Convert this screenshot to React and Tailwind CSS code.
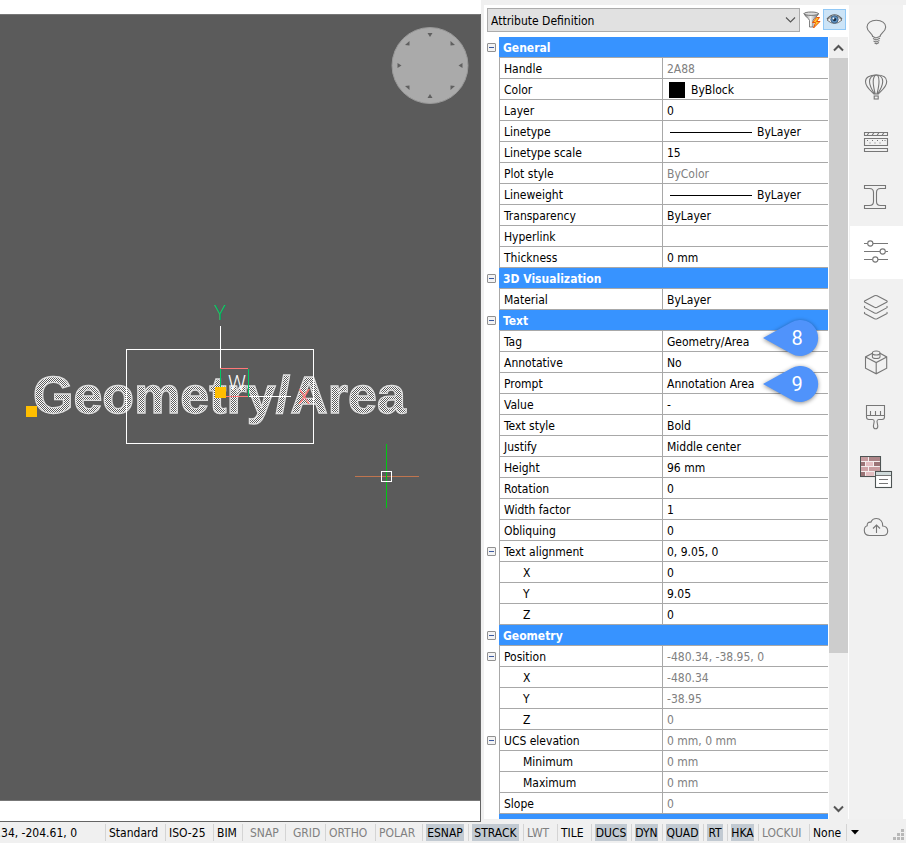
import { clsx } from "clsx";

const ROWS = [
  { head: "General" },
  { label: "Handle", value: "2A88", dim: true },
  { label: "Color", value: "ByBlock", swatch: true },
  { label: "Layer", value: "0" },
  { label: "Linetype", value: "ByLayer", line: true },
  { label: "Linetype scale", value: "15" },
  { label: "Plot style", value: "ByColor", dim: true },
  { label: "Lineweight", value: "ByLayer", line: true },
  { label: "Transparency", value: "ByLayer" },
  { label: "Hyperlink", value: "" },
  { label: "Thickness", value: "0 mm" },
  { head: "3D Visualization" },
  { label: "Material", value: "ByLayer" },
  { head: "Text" },
  { label: "Tag", value: "Geometry/Area", marker: "8" },
  { label: "Annotative", value: "No" },
  { label: "Prompt", value: "Annotation Area", marker: "9" },
  { label: "Value", value: "-" },
  { label: "Text style", value: "Bold" },
  { label: "Justify", value: "Middle center" },
  { label: "Height", value: "96 mm" },
  { label: "Rotation", value: "0" },
  { label: "Width factor", value: "1" },
  { label: "Obliquing", value: "0" },
  { label: "Text alignment", value: "0, 9.05, 0", expand: true },
  { label: "X", value: "0", indent: true },
  { label: "Y", value: "9.05", indent: true },
  { label: "Z", value: "0", indent: true },
  { head: "Geometry" },
  { label: "Position", value: "-480.34, -38.95, 0", expand: true, dim: true },
  { label: "X", value: "-480.34", indent: true, dim: true },
  { label: "Y", value: "-38.95", indent: true, dim: true },
  { label: "Z", value: "0", indent: true, dim: true },
  { label: "UCS elevation", value: "0 mm, 0 mm", expand: true, dim: true },
  { label: "Minimum", value: "0 mm", indent: true, dim: true },
  { label: "Maximum", value: "0 mm", indent: true, dim: true },
  { label: "Slope", value: "0", dim: true },
  { head: "" },
];

const STATUS = [
  { text: "Standard", w: "w-[60px]" },
  { text: "ISO-25", w: "w-[48px]" },
  { text: "BIM", w: "w-[29px]" },
  { text: "SNAP", w: "w-[43px]", off: true, wide: true },
  { text: "GRID", w: "w-[40px]", off: true, wide: true },
  { text: "ORTHO", w: "w-[50px]", off: true },
  { text: "POLAR", w: "w-[47px]", off: true },
  { text: "ESNAP", w: "w-[46px]", on: true },
  { text: "STRACK", w: "w-[55px]", on: true },
  { text: "LWT", w: "w-[34px]", off: true },
  { text: "TILE", w: "w-[34px]" },
  { text: "DUCS", w: "w-[40px]", on: true },
  { text: "DYN", w: "w-[31px]", on: true },
  { text: "QUAD", w: "w-[41px]", on: true },
  { text: "RT", w: "w-[24px]", on: true },
  { text: "HKA", w: "w-[31px]", on: true },
  { text: "LOCKUI", w: "w-[51px]", off: true },
  { text: "None", w: "w-[37px]" },
];

function Canvas() {
  return (
    <div className="relative flex-1 overflow-hidden border-y border-[#777] bg-[#5b5b5b]">
      <svg className="absolute left-0 top-0" width="480" height="560" shapeRendering="crispEdges">
        <defs>
          <pattern id="dither" width="4" height="4" patternUnits="userSpaceOnUse">
            <rect width="4" height="4" fill="#5b5b5b" />
            <path d="M0 0h1v1H0zM2 0h1v1H2zM1 1h1v1H1zM3 1h1v1H3zM0 2h1v1H0zM2 2h1v1H2zM1 3h1v1H1zM3 3h1v1H3z" fill="#fff" />
          </pattern>
        </defs>
        <text x="33" y="398" fontFamily="Liberation Sans, Arial, sans-serif" fontWeight="700" fontSize="52" fill="url(#dither)" stroke="#dcdcdc" strokeWidth="1.300">
          Geometry/Area
        </text>
        <g fill="none" strokeWidth="1">
          <rect x="126.5" y="334.5" width="187" height="94" stroke="#fff" />
          <path d="M220.5 311v43M249 381.5h42" stroke="#fff" />
          <path d="M220 353.5h28M226 381.5h22" stroke="#ff7878" />
          <path d="M220.5 354v18M248.5 354v28" stroke="#00c864" />
          <path d="M355 461.5h64" stroke="#c0754f" />
          <path d="M386.5 429v64" stroke="#00c814" />
          <rect x="381.5" y="456.5" width="10" height="10" stroke="#fff" />
        </g>
        <g fontFamily="Roboto, sans-serif" fontWeight="300" fontSize="20">
          <text x="214" y="305" fill="#00c864">Y</text>
          <text x="228" y="375" fill="#fff">W</text>
          <text x="298" y="389" fill="#ff7878">X</text>
        </g>
        <rect x="26" y="391" width="11" height="11" fill="#ffbe00" />
        <rect x="215" y="372" width="11" height="11" fill="#ffbe00" />
      </svg>
      <svg className="absolute right-[11px] top-3" width="78" height="78" viewBox="0 0 78 78">
        <circle cx="39" cy="38.500" r="38" fill="#aaa" stroke="#999" strokeWidth="1" />
        <g fill="#606060">
          <path d="M36.500 6h5l-2.500 4z" />
          <path d="M36.500 71h5l-2.500-4z" />
          <path d="M6.500 36v5l4-2.500z" />
          <path d="M71.500 36v5l-4-2.500z" />
          <path d="M14 18l4.500-4v4.500z" />
          <path d="M64 18l-4.500-4v4.500z" />
          <path d="M14 59l4.500 4v-4.500z" />
          <path d="M64 59l-4.500 4v-4.500z" />
        </g>
      </svg>
    </div>
  );
}

function Expander({ name }) {
  return (
    <button aria-label={"Collapse " + name} className="ml-[3px] flex size-[9px] items-center justify-center rounded-[1px] border border-[#919191] bg-[#f3f3f3]">
      <span className="h-px w-[5px] bg-[#3c5aa0]" />
    </button>
  );
}

function Marker({ text }) {
  return (
    <svg
      className={clsx("absolute left-[96px] z-10", text === "8" ? "-top-4" : "-top-3")}
      width="66"
      height="48"
      viewBox="0 0 66 48"
    >
      <g filter="drop-shadow(0 1px 2px rgba(0,0,0,.45))">
        <path d="M4 23L32 7.500A18 18 0 1 1 32 38.500Z" fill="#5093fb" />
      </g>
      <text x="38" y="30" textAnchor="middle" fontFamily="Roboto, sans-serif" fontSize="20" fill="#fff">
        {text}
      </text>
    </svg>
  );
}

function Row({ row }) {
  if (row.head !== undefined) {
    return (
      <tr className="h-[21px]">
        <td className="w-[15px] p-0">{row.head && <Expander name={row.head} />}</td>
        <th colSpan={2} scope="colgroup" className="border-b border-[#a8a8a8] bg-[#3793ff] p-0 pl-1 pt-0.5 text-left font-bold text-white">
          {row.head}
        </th>
      </tr>
    );
  }
  return (
    <tr className="h-[21px]">
      <td className="w-[15px] p-0">{row.expand && <Expander name={row.label} />}</td>
      <th scope="row" className={clsx("w-[163px] border-b border-l border-[#a8a8a8] p-0 pt-0.5 text-left font-normal", row.indent ? "pl-[23px]" : "pl-1")}>
        {row.label}
      </th>
      <td className={clsx("relative border-b border-l border-[#a8a8a8] p-0 pl-1 pt-0.5", row.dim && "text-[#808080]")}>
        <div className="flex items-center">
          {row.swatch && <span className="ml-0.5 mr-1.5 size-4 bg-black" />}
          {row.line && <span className="ml-[3px] mr-[5px] h-px w-[82px] bg-black" />}
          {row.value}
        </div>
        {row.marker && <Marker text={row.marker} />}
      </td>
    </tr>
  );
}

function Properties() {
  return (
    <section className="flex w-[365px] shrink-0 flex-col bg-white">
      <div className="flex h-8 shrink-0 items-start pl-[3px] pt-[3px]">
        <div className="relative">
          <select aria-label="Entity type" className="h-6 w-[313px] appearance-none border border-[#acacac] bg-[#e1e1e1] px-[3px] pt-0.5">
            <option>Attribute Definition</option>
          </select>
          <svg className="pointer-events-none absolute right-1 top-2" width="11" height="8" viewBox="0 0 11 8">
            <path d="M1 1.500l4.500 4.500L10 1.500" fill="none" stroke="#555" strokeWidth="1.100" />
          </svg>
        </div>
        <button aria-label="Quick select" className="ml-[3px] flex h-6 w-[18px] items-center justify-center">
          <svg width="18" height="18" viewBox="0 0 18 18">
            <defs>
              <linearGradient id="funnel">
                <stop offset="0" stopColor="#777" />
                <stop offset="0.450" stopColor="#f4f4f4" />
                <stop offset="1" stopColor="#777" />
              </linearGradient>
            </defs>
            <path d="M1 2.500c0 2.500 5.500 5 5.500 7v6.500h3.500V9.500c0-2 5.500-4.500 5.500-7z" fill="url(#funnel)" stroke="#666" strokeWidth="0.800" />
            <ellipse cx="8.200" cy="2.700" rx="7.200" ry="1.700" fill="#ddd" stroke="#666" strokeWidth="0.900" />
            <path d="M13.500 6.500l-4 5h3l-2 5.500 6.500-6.500h-3.500l3-4z" fill="#ffc928" stroke="#e8500a" strokeWidth="1" />
          </svg>
        </button>
        <button aria-label="Toggle highlight" className="ml-[2px] mt-px flex h-[21px] w-[23px] items-center justify-center border border-[#90c8f6] bg-[#cce4f7]">
          <svg width="17" height="13" viewBox="0 0 17 13">
            <path d="M1 7Q8.500-1 16 7Q8.500 14 1 7z" fill="#f2f2f2" stroke="#777" strokeWidth="1" />
            <path d="M1 6Q8.500-2.500 16 6" fill="none" stroke="#666" strokeWidth="1.200" />
            <circle cx="8.500" cy="6.500" r="3.700" fill="#5b8fbf" stroke="#47698c" />
            <circle cx="8.500" cy="6.500" r="1.700" fill="#162c44" />
            <circle cx="7.500" cy="5.500" r="0.900" fill="#fff" />
          </svg>
        </button>
      </div>
      <div className="flex min-h-0 flex-1">
        <div className="min-w-0 flex-1 overflow-hidden">
          <table className="w-full table-fixed border-separate border-spacing-0">
            <colgroup>
              <col className="w-[15px]" />
              <col className="w-[163px]" />
              <col />
            </colgroup>
            <tbody>
              {ROWS.map((row, i) => (
                <Row key={i} row={row} />
              ))}
            </tbody>
          </table>
        </div>
        <div className="mx-px flex w-[19px] shrink-0 flex-col bg-[#f0f0f0]">
          <button aria-label="Scroll up" className="flex h-[21px] items-center justify-center">
            <svg width="11" height="8" viewBox="0 0 11 8">
              <path d="M1 6.500l4.500-4.500 4.500 4.500" fill="none" stroke="#555" strokeWidth="2" />
            </svg>
          </button>
          <div className="flex flex-1 flex-col">
            <div className="grow-[595] bg-[#cdcdcd]" />
            <div className="grow-[145]" />
          </div>
          <button aria-label="Scroll down" className="flex h-[21px] items-center justify-center">
            <svg width="11" height="8" viewBox="0 0 11 8">
              <path d="M1 1.500l4.500 4.500 4.500-4.500" fill="none" stroke="#555" strokeWidth="2" />
            </svg>
          </button>
        </div>
      </div>
    </section>
  );
}

const TOOLS = [
  {
    name: "Tips",
    art: (
      <>
        <path d="M12.800 21c0-4-5.800-5-5.800-10C7 7 11 4.200 16.300 4.200S25.700 7 25.700 11c0 5-5.800 6-5.800 10" />
        <path d="M12.800 20.500l3 1.500 4-1.500M13 22.500l3 1.500 4-1.800M13.500 25l2.500 1 3.500-1.500M14.500 27l2 .8 2.500-1.300" />
      </>
    ),
  },
  {
    name: "Mechanical browser",
    art: (
      <>
        <path d="M14 23C10 19 5.500 16 5.500 10.500 5.500 6.500 9.500 4 16.200 4s10.500 2.500 10.500 6.500c0 5.500-4.500 8.500-8.500 12.500z" />
        <path d="M14.500 23C12 19 9.500 15 9.500 10.500 9.500 7 12 4 16.200 4s6.500 3 6.500 6.500c0 4.500-2.500 8.500-5 12.500M15.200 23c-1-4-2-8-2-12.500C13.200 7 14.500 4 16.200 4s2.800 3 2.800 6.500c0 4.500-1 8.500-2 12.500" />
        <rect x="14.200" y="25" width="4" height="3" />
      </>
    ),
  },
  {
    name: "Compositions",
    art: (
      <>
        <path d="M4.500 6.500h23v3h-23zM4.500 12.500h23v7h-23zM4.500 22.500h23v3h-23z" />
        <path d="M7 9.500l2-3M12 9.500l2-3M17 9.500l2-3M22 9.500l2-3" />
        <path d="M7 14.500h1M12 14.500h1M17 14.500h1M22 14.500h1M9.500 17h1M14.500 17h1M19.500 17h1M24.500 14.500h1" />
      </>
    ),
  },
  {
    name: "Profiles",
    art: <path d="M4.500 4.500h21v3h-5c-3 0-4 1.500-4 4v9c0 2.500 1 4 4 4h5v3h-21v-3h5c3 0 4-1.500 4-4v-9c0-2.500-1-4-4-4h-5z" />,
  },
  {
    name: "Properties",
    active: true,
    art: (
      <>
        <path d="M4 7.500h3.500M13 7.500h15M4 15.500h16M25.500 15.500H28M4 23.500h8.500M18 23.500h10" />
        <circle cx="10.300" cy="7.500" r="2.600" />
        <circle cx="22.700" cy="15.500" r="2.600" />
        <circle cx="15.300" cy="23.500" r="2.600" />
      </>
    ),
  },
  {
    name: "Layers",
    art: (
      <>
        <path d="M14.500 4.800q1.300-.6 2.600 0l9.500 4.900q1.200.8 0 1.600l-9.500 5q-1.300.6-2.600 0l-9.500-5q-1.200-.8 0-1.600z" />
        <path d="M5 15.300q-1.200.8 0 1.600l9.500 5q1.300.6 2.600 0l9.500-5q1.200-.8 0-1.600M5 21.100q-1.200.8 0 1.600l9.500 5q1.300.6 2.600 0l9.500-5q1.200-.8 0-1.600" />
      </>
    ),
  },
  {
    name: "Components",
    art: (
      <>
        <path d="M12.400 7.200l-6.900 3.700v11.300l10.700 5.600 10.500-5.600V10.900L20 7.200M5.500 10.900l10.700 5.700 10.500-5.700M16.200 16.600v11.200" />
        <path d="M12.400 7v3.800c0 2.300 7.600 2.300 7.600 0V7" />
        <ellipse cx="16.200" cy="7" rx="3.800" ry="2" />
      </>
    ),
  },
  {
    name: "Styles",
    art: (
      <path d="M6.500 4.500h18v10h-18zM10.500 10v4.500M15.500 10v4.500M20.500 10v4.500M6.500 14.500v1.500q0 2.500 2.500 2.500h3.500q1.700 0 1.700 2l-.8 4.500q0 2.800 2.200 2.800t2.200-2.800l-.8-4.500q0-2 1.700-2H22q2.500 0 2.500-2.500v-1.500" />
    ),
  },
  {
    name: "Materials",
    art: (
      <>
        <rect x="0.500" y="0.500" width="20" height="20" fill="#f4eeee" stroke="#4e5454" />
        <g stroke="none">
          <path d="M1 1h7v4H1zM9 11h11v4H9z" fill="#c89c9f" />
          <path d="M9 1h11v4H9z" fill="#ad8588" />
          <path d="M1 6h4v4H1zM14 6h6v4h-6zM1 16h4v4H1z" fill="#9b7476" />
          <path d="M6 6h7v4H6zM6 16h8v4H6z" fill="#e4bfc2" />
          <path d="M1 11h7v4H1z" fill="#cfa4a7" />
        </g>
        <rect x="15.500" y="15.500" width="16" height="16" fill="#fff" stroke="#4e5454" />
        <path d="M16 16h15v3H16z" fill="#cfdada" stroke="none" />
        <path d="M16 19.500h15M19 23.500h9M19 27.500h9" />
      </>
    ),
  },
  {
    name: "Cloud",
    art: (
      <>
        <path d="M9.500 24.500h13.500c3 0 4.700-2 4.700-4.500 0-3-2-5-5-5 .5-4-2.500-7.500-6.300-7.500-2.700 0-4.600 1.400-5.500 3.700-2.500-.3-4 1-3.700 3.600-2 .5-2.900 2.400-2.900 4.500 0 3 2 5.200 5.200 5.200z" />
        <path d="M16.500 22v-8M13 17.500l3.500-3.500 3.500 3.500" />
      </>
    ),
  },
];

function ToolStrip() {
  return (
    <nav className="mr-[3px] flex w-[54px] shrink-0 flex-col bg-[#f1f1f1] pl-px">
      {TOOLS.map((tool) => (
        <button
          key={tool.name}
          aria-label={tool.name}
          className={clsx("my-px flex h-[53px] items-center justify-center", tool.active && "bg-white")}
        >
          <svg width="33" height="33" viewBox="0 0 33 33" fill="none" stroke="#777" strokeWidth="1.100">
            {tool.art}
          </svg>
        </button>
      ))}
    </nav>
  );
}

function StatusBar() {
  return (
    <footer className="flex h-[21px] shrink-0 bg-[#f0f0f0] py-0.5">
      <div className="flex w-[105px] shrink-0 items-center justify-end overflow-hidden whitespace-nowrap pr-7">
        -480.34, -204.61, 0
      </div>
      {STATUS.map((s) => (
        <button
          key={s.text}
          className={clsx(
            "flex shrink-0 items-center whitespace-nowrap border-l border-[#d4d4d4]",
            s.w,
            s.wide ? "pl-[7px]" : "pl-[3px]",
            s.off && "text-[#808080]"
          )}
        >
          {s.on ? <span className="mr-1 flex h-full flex-1 items-center justify-center bg-[#c2cad2]">{s.text}</span> : s.text}
        </button>
      ))}
      <button aria-label="More" className="flex w-4 items-center justify-center border-l border-[#d4d4d4]">
        <svg width="8" height="5" viewBox="0 0 8 5">
          <path d="M0 0h8L4 4.500z" fill="#000" />
        </svg>
      </button>
      <svg className="ml-auto mr-px self-end" width="12" height="12" fill="#b8b8b8">
        <path d="M8 0h3v3H8zM8 4h3v3H8zM4 4h3v3H4zM8 8h3v3H8zM4 8h3v3H4zM0 8h3v3H0z" />
      </svg>
    </footer>
  );
}

export default function App() {
  return (
    <div className="flex h-screen flex-col overflow-hidden bg-white font-['DejaVu_Sans_Condensed','DejaVu_Sans',sans-serif] text-[12px] leading-4 text-black">
      <main className="flex min-h-0 flex-1">
        <div className="flex min-w-0 flex-1 flex-col border-b border-[#646464]">
          <div className="mr-px h-3.5 shrink-0 bg-white" />
          <div className="flex flex-1 flex-col border-r border-[#646464]">
            <Canvas />
            <div className="h-5 shrink-0 bg-white" />
          </div>
        </div>
        <div className="flex shrink-0 flex-col bg-[#f0f0f0] pb-[3px] pl-[3px]">
          <div className="h-[5px] shrink-0" />
          <div className="flex min-h-0 flex-1 bg-white">
            <Properties />
            <ToolStrip />
          </div>
        </div>
      </main>
      <StatusBar />
    </div>
  );
}
